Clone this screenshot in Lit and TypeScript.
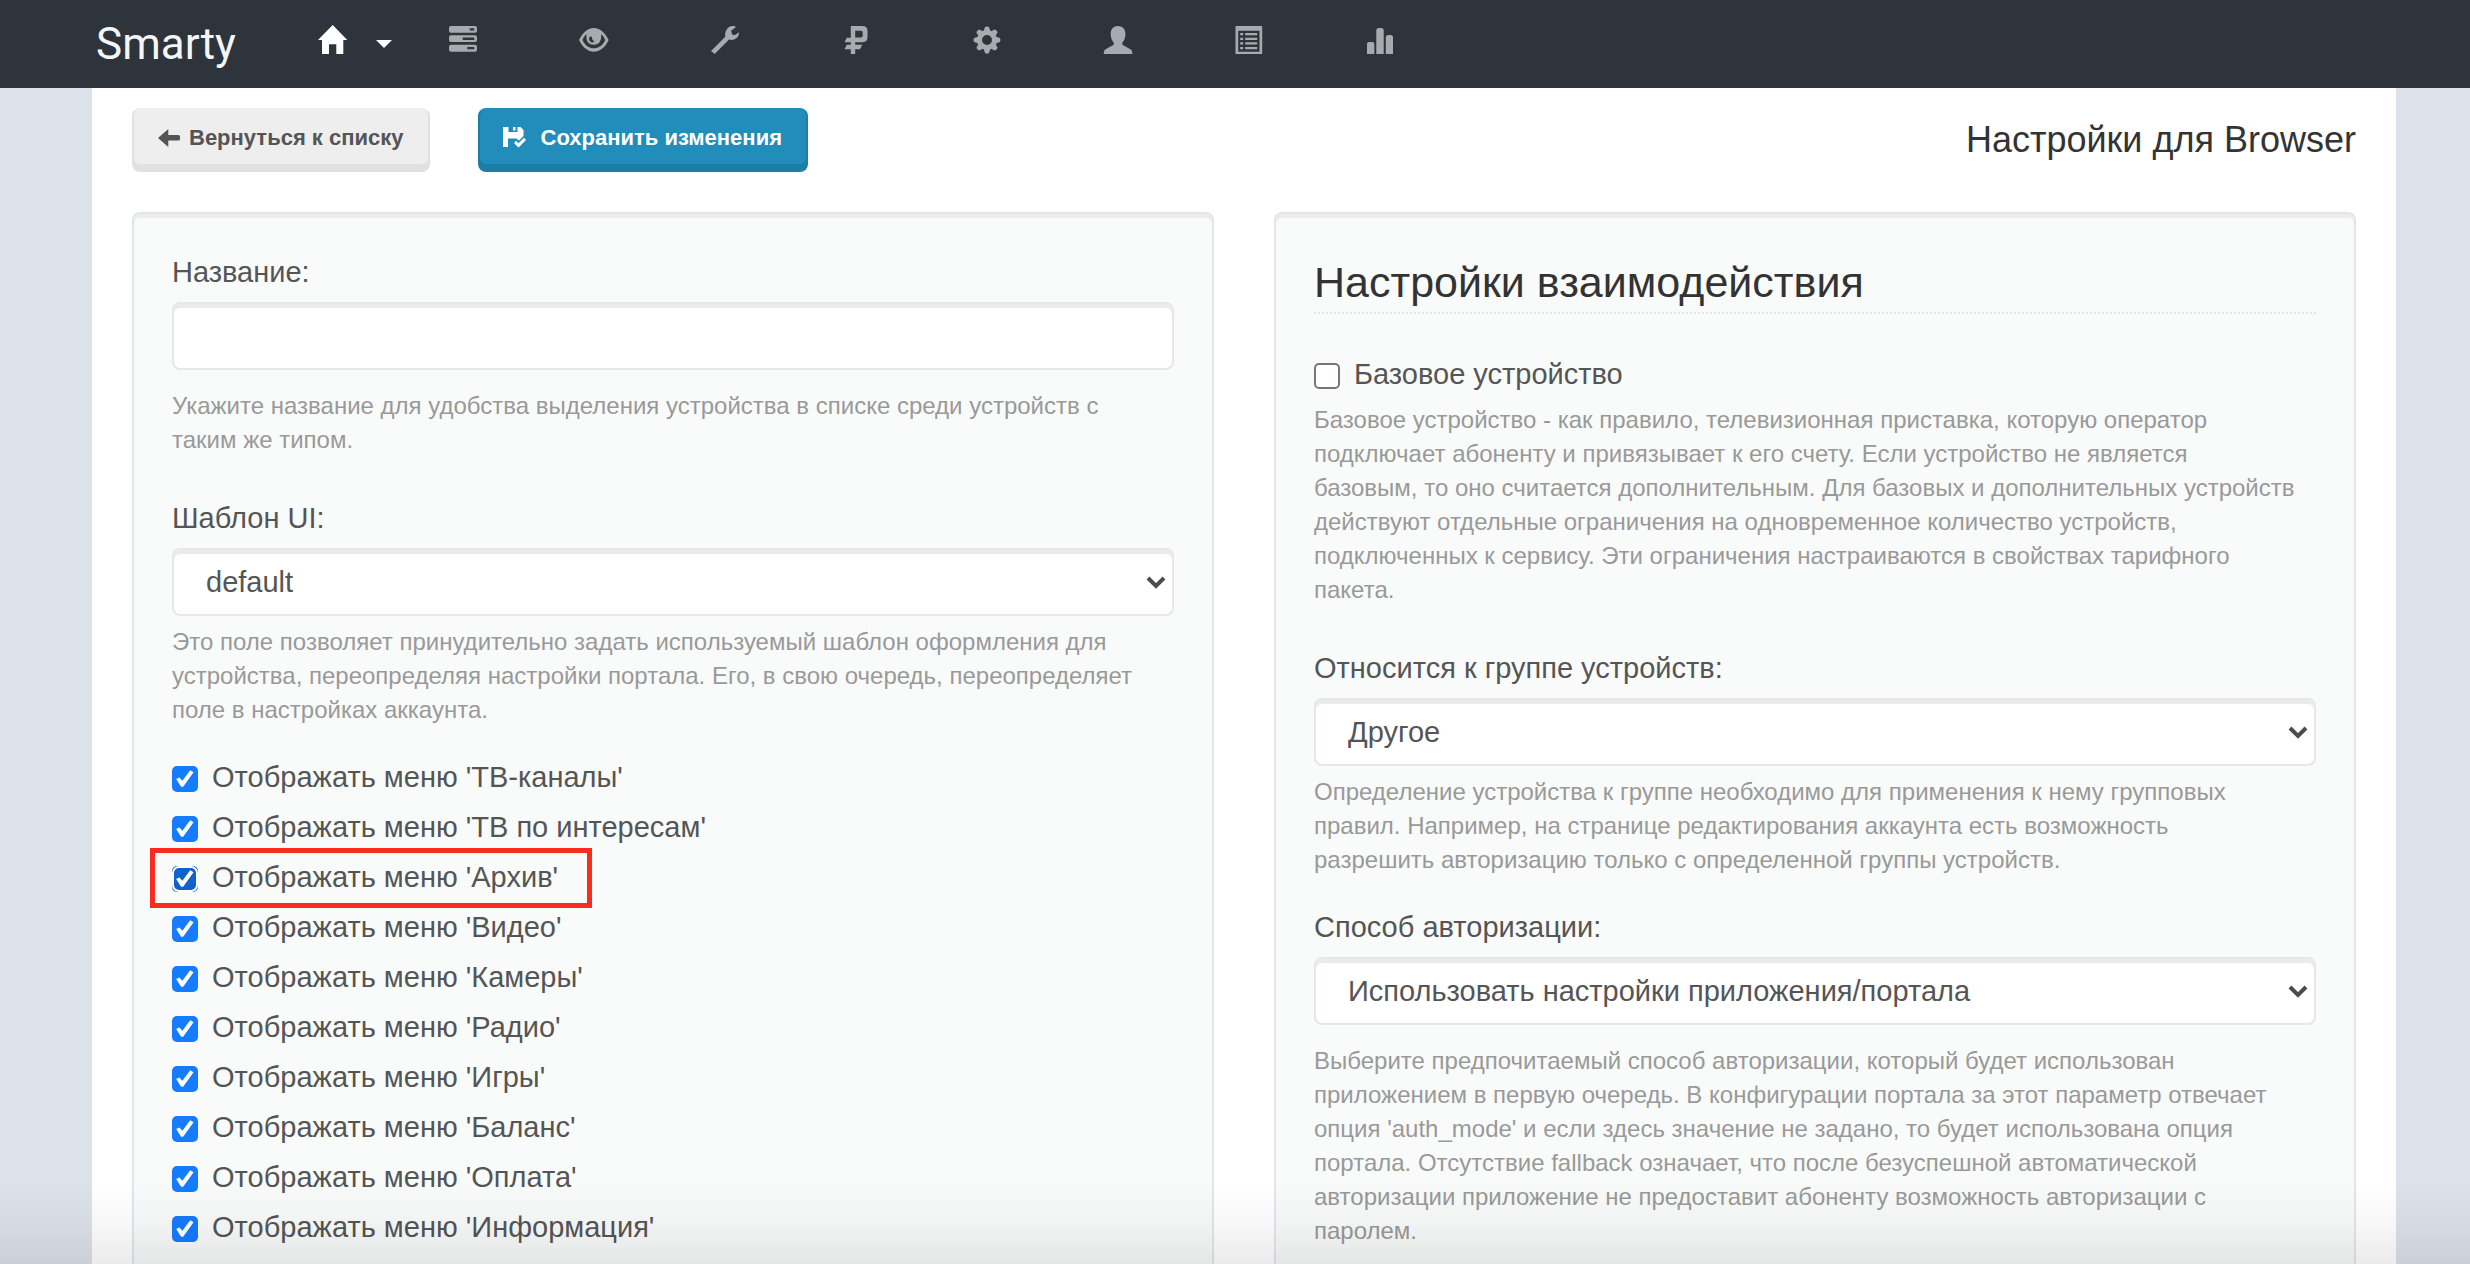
import { LitElement, html, css, svg } from "lit";
import { customElement, state } from "lit/decorators.js";
import { classMap } from "lit/directives/class-map.js";

const gearTeeth = [0, 45, 90, 135, 180, 225, 270, 315];

const icons = {
  home: svg`<path d="M14.7 0 29.3 15H25.3V29H18.300V19.300H11V29H4V15H0Z"/>`,
  servers: svg`<path fill-rule="evenodd" d="M3 1H27a2 2 0 0 1 2 2V5.700a2 2 0 0 1-2 2H3a2 2 0 0 1-2-2V3a2 2 0 0 1 2-2ZM21.700 3.300V5.600H26.300V3.300ZM3 10.300H27a2 2 0 0 1 2 2V15a2 2 0 0 1-2 2H3a2 2 0 0 1-2-2V12.300a2 2 0 0 1 2-2ZM14.700 12.600V15H26.300V12.600ZM3 19.700H27a2 2 0 0 1 2 2V24.700a2 2 0 0 1-2 2H3a2 2 0 0 1-2-2V21.700a2 2 0 0 1 2-2ZM19.300 22V24.300H26.300V22Z"/>`,
  eye: svg`<path transform="translate(0 3)" fill-rule="evenodd" d="M0 12C4 4 9 0 14.800 0S25.700 4 29.700 12C26 20 20.500 23.700 14.800 23.700S4 20 0 12ZM3.500 12C6 17.500 10 20.300 14.800 20.300S24 17.500 26.200 12C25.200 9.500 24 7.500 22 6.200C23 12 20.500 16.700 14.700 16.700S6.500 12 7.700 6.200C5.500 7.500 4.500 9.500 3.500 12ZM11 8.800C9.500 10 9.800 12.500 11.500 13.800C13 14.800 15 14.500 15.300 13C13.500 12.500 12.800 11 13 9.300C12.500 8.500 11.800 8.300 11 8.800Z"/>`,
  wrench: svg`<path transform="translate(1 1)" d="M0 25 14.300 10.700C13.500 5 16.500.5 21.500 0C23 0 24.200.4 25 1L20 4.700 21.300 8.700 24 9 28 6.300C28.200 10.500 25 14 20.500 14C19.500 14 18.700 13.800 18 13.500L3.700 28Z"/>`,
  ruble: svg`<path transform="translate(3.500 1)" fill-rule="evenodd" d="M6.300 0H18Q23 0 23 5V11Q23 16.200 18 16.200H10.700V18.700H17.700L15.500 23.300H10.700V28H6.300V23.300H0L2.300 18.700H6.300V16.200H0L2.300 11.700H6.300ZM10.700 4.700V11.500H16.500Q18.200 11.500 18.200 9.700V6.500Q18.200 4.700 16.500 4.700Z"/>`,
  gear: svg`<g transform="translate(15 15)"><circle r="7.500" fill="none" stroke="currentColor" stroke-width="5"/>${gearTeeth.map((a) => svg`<path transform="rotate(${a})" d="M-3.300-9 -2-13Q0-14 2-13L3.300-9Z"/>`)}</g>`,
  user: svg`<path transform="translate(.7 1)" d="M14.300 0C18.700 0 21.700 3 21.700 7.500C21.700 11 20.700 15 18.700 16.500V18.700C22 21 26.500 22.500 28 24.500Q28.700 25.500 28.700 28H0Q0 25.500.7 24.500C2.200 22.500 6.700 21 10 18.700V16.500C8 15 7 11 7 7.500C7 3 10 0 14.300 0Z"/>`,
  list: svg`<path transform="translate(1.500 1)" fill-rule="evenodd" d="M0 0H26.700V28H0ZM2.700 4.700V25.700H24V4.700ZM4.700 7h3v2.300h-3ZM9.700 7h12v2.300h-12ZM4.700 11.700h3V14h-3ZM9.700 11.700h12V14h-12ZM4.700 16.300h3v2.300h-3ZM9.700 16.300h12v2.300h-12ZM4.700 21h3v2.300h-3ZM9.700 21h12v2.300h-12Z"/>`,
  chart: svg`<path transform="translate(2 3)" d="M0 26V16Q0 14 2 14H5.300Q7.300 14 7.300 16V26ZM9.300 26V2.500Q9.300 0 11.800 0H14.200Q16.700 0 16.700 2.500V26ZM18.800 26V9.500Q18.800 7 21.300 7H23.500Q26 7 26 9.500V26Z"/>`,
};

const menuLinks: { label: string; icon: keyof typeof icons }[] = [
  { label: "Серверы", icon: "servers" },
  { label: "Просмотр", icon: "eye" },
  { label: "Инструменты", icon: "wrench" },
  { label: "Платежи", icon: "ruble" },
  { label: "Настройки", icon: "gear" },
  { label: "Пользователи", icon: "user" },
  { label: "Журнал", icon: "list" },
  { label: "Статистика", icon: "chart" },
];

const menuFlags = ["ТВ-каналы", "ТВ по интересам", "Архив", "Видео", "Камеры", "Радио", "Игры", "Баланс", "Оплата", "Информация"];

@customElement("app-root")
export class AppRoot extends LitElement {
  @state() private highlighted = "Архив";

  static styles = css`
    :host {
      display: block;
      font-family: "Liberation Sans", Arial, sans-serif;
      font-size: 29px;
      line-height: 40px;
      color: #555;
    }
    *, *::before, *::after { box-sizing: border-box; }
    .page {
      min-height: 100vh;
      display: flex;
      flex-direction: column;
      background: #dde1e9;
    }
    .bar {
      height: 88px;
      padding: 0 96px;
      display: flex;
      align-items: center;
      background: #2d343c;
    }
    .logo {
      width: 222px;
      font-family: Roboto, "Liberation Sans", sans-serif;
      font-size: 44px;
      line-height: 60px;
      color: #f4f5f6;
      text-decoration: none;
    }
    .menu { display: flex; align-items: center; padding-bottom: 8px; }
    .home { display: flex; align-items: center; gap: 28px; width: 79px; color: #fff; }
    .link { display: flex; justify-content: center; width: 131px; color: #a7abb1; }
    .icon { width: 30px; height: 30px; fill: currentColor; display: block; }
    .caret { width: 16px; height: 8px; fill: currentColor; display: block; margin-top: 8px; }
    .sheet {
      flex: 1;
      display: flex;
      flex-direction: column;
      gap: 40px;
      margin: 0 74px 0 92px;
      padding: 20px 40px 0;
      background: #fff;
    }
    .actions { display: flex; align-items: center; gap: 48px; }
    .button {
      height: 64px;
      display: flex;
      align-items: center;
      padding: 0 24px 4px;
      border: 2px solid #e1e1e1;
      border-top-color: #eee;
      border-radius: 8px;
      background: #eee;
      box-shadow: inset 0 -6px #e1e1e1;
      font: bold 22px/32px "Liberation Sans", Arial, sans-serif;
      color: #555;
    }
    .back { gap: 9px; }
    .save {
      gap: 15px;
      padding-left: 22px;
      color: #fff;
      background: #228dba;
      border-color: #1e7da5;
      border-top-color: #228dba;
      box-shadow: inset 0 -6px #1e7da5;
    }
    .glyph { width: 22px; height: 18px; fill: currentColor; display: block; }
    .disk { width: 24px; height: 24px; fill: currentColor; display: block; }
    .title {
      margin: 0 0 0 auto;
      font-size: 36px;
      line-height: 52px;
      font-weight: normal;
      color: #333;
    }
    .columns {
      flex: 1;
      display: grid;
      grid-template-columns: 1fr 1fr;
      gap: 60px;
    }
    .panel {
      padding: 38px 38px 0;
      border: 2px solid #e2e6ea;
      border-bottom: 0;
      border-radius: 8px 8px 0 0;
      background: #f9fbfa;
      box-shadow: inset 0 4px #ebeeed;
    }
    .group { margin-bottom: 30px; }
    .label { display: block; margin-bottom: 10px; }
    .field {
      display: block;
      width: 100%;
      height: 68px;
      padding: 0 32px;
      border: 2px solid #e6e7e7;
      border-radius: 8px;
      background: #fff;
      box-shadow: inset 0 4px #ebebeb;
      font: inherit;
      color: #555;
      appearance: none;
      outline: 0;
    }
    .picker { position: relative; }
    .chevron {
      position: absolute;
      right: 8px;
      top: 28px;
      width: 20px;
      height: 14px;
      fill: none;
      stroke: #4c4c4c;
      stroke-width: 4;
      pointer-events: none;
    }
    .help {
      margin: 9px 0 0;
      font-size: 24px;
      line-height: 34px;
      color: #999;
      white-space: nowrap;
    }
    .spaced { margin-top: 19px; }
    .roomy { margin-bottom: 41px; }
    .heading {
      margin: 0 0 40px;
      padding: 6px 0 6px;
      border-bottom: 2px dotted #e3e5e4;
      font-size: 43px;
      line-height: 48px;
      font-weight: normal;
      color: #333;
    }
    .flags { display: grid; gap: 10px; margin: 0; padding: 0; list-style: none; }
    .flag { position: relative; display: flex; align-items: flex-start; gap: 14px; }
    .tick {
      flex: none;
      appearance: none;
      position: relative;
      width: 26px;
      height: 26px;
      margin: 9px 0 0;
      border: 2px solid #767676;
      border-radius: 5px;
      background: #fff;
    }
    .tick:checked {
      border: 0;
      background: #157bff;
    }
    .tick:checked::before {
      content: "";
      position: absolute;
      inset: 0;
      background: #fff;
      clip-path: polygon(16% 50%, 28% 44%, 40% 57%, 70% 16%, 83% 24%, 43% 80%, 35% 80%);
    }
    .marked .tick { background: #0e62cb; }
    .marked .tick::after {
      content: "";
      position: absolute;
      inset: 0;
      border: 2px solid #fff;
      border-radius: 7px;
    }
    .marked::after {
      content: "";
      position: absolute;
      left: -22px;
      top: -9px;
      width: 442px;
      height: 60px;
      border: 5px solid #fb2c1e;
      pointer-events: none;
    }
    .shade {
      position: fixed;
      inset: auto 0 0;
      height: 84px;
      background: linear-gradient(rgba(0, 0, 0, 0), rgba(0, 0, 0, 0.03) 55%, rgba(0, 0, 0, 0.08));
      pointer-events: none;
    }
  `;

  private renderPicker(id: string, label: string, value: string) {
    return html`
      <label class="label" for=${id}>${label}</label>
      <div class="picker">
        <select class="field" id=${id}><option>${value}</option></select>
        <svg class="chevron" viewBox="0 0 20 14"><path d="M2 2 10 10 18 2" /></svg>
      </div>
    `;
  }

  render() {
    return html`
      <div class="page">
        <header class="bar">
          <a class="logo" href="#">Smarty</a>
          <nav class="menu">
            <a class="home" href="#" aria-label="Главная">
              <svg class="icon" viewBox="0 0 30 30">${icons.home}</svg>
              <svg class="caret" viewBox="0 0 16 8"><path d="M0 0H16L8 8Z" /></svg>
            </a>
            ${menuLinks.map((m) => html`<a class="link" href="#" aria-label=${m.label}><svg class="icon" viewBox="0 0 30 30">${icons[m.icon]}</svg></a>`)}
          </nav>
        </header>
        <main class="sheet">
          <div class="actions">
            <button class="button back" type="button">
              <svg class="glyph" viewBox="0 0 22 18"><path d="M0 9 10.300 0V6H20.500Q22 6 22 7.500V10Q22 11.500 20.500 11.500H10.300V18Z" /></svg>
              Вернуться к списку
            </button>
            <button class="button save" type="button">
              <svg class="disk" viewBox="0 0 24 24"><path d="M1 1H6.500V6H15.500V1H18.500L21.500 4V10L17 14.500 14.500 12.500H6V21H1ZM11 1H13.500V4.500H11ZM12 17 14 14.800 16.500 17.300 22 11.800 24 14 16.500 21.500Z" /></svg>
              Сохранить изменения
            </button>
            <h1 class="title">Настройки для Browser</h1>
          </div>
          <div class="columns">
            <section class="panel">
              <div class="group roomy">
                <label class="label" for="name">Название:</label>
                <input class="field" id="name" type="text" />
                <p class="help spaced">Укажите название для удобства выделения устройства в списке среди устройств с<br />таким же типом.</p>
              </div>
              <div class="group">
                ${this.renderPicker("template", "Шаблон UI:", "default")}
                <p class="help">Это поле позволяет принудительно задать используемый шаблон оформления для<br />устройства, переопределяя настройки портала. Его, в свою очередь, переопределяет<br />поле в настройках аккаунта.</p>
              </div>
              <ul class="flags">
                ${menuFlags.map((f) => html`<li><label class=${classMap({ flag: true, marked: f === this.highlighted })}><input class="tick" type="checkbox" checked />Отображать меню '${f}'</label></li>`)}
              </ul>
            </section>
            <section class="panel">
              <h2 class="heading">Настройки взаимодействия</h2>
              <div class="group roomy">
                <label class="flag"><input class="tick" type="checkbox" />Базовое устройство</label>
                <p class="help">Базовое устройство - как правило, телевизионная приставка, которую оператор<br />подключает абоненту и привязывает к его счету. Если устройство не является<br />базовым, то оно считается дополнительным. Для базовых и дополнительных устройств<br />действуют отдельные ограничения на одновременное количество устройств,<br />подключенных к сервису. Эти ограничения настраиваются в свойствах тарифного<br />пакета.</p>
              </div>
              <div class="group">
                ${this.renderPicker("device-group", "Относится к группе устройств:", "Другое")}
                <p class="help">Определение устройства к группе необходимо для применения к нему групповых<br />правил. Например, на странице редактирования аккаунта есть возможность<br />разрешить авторизацию только с определенной группы устройств.</p>
              </div>
              <div>
                ${this.renderPicker("auth", "Способ авторизации:", "Использовать настройки приложения/портала")}
                <p class="help spaced">Выберите предпочитаемый способ авторизации, который будет использован<br />приложением в первую очередь. В конфигурации портала за этот параметр отвечает<br />опция 'auth_mode' и если здесь значение не задано, то будет использована опция<br />портала. Отсутствие fallback означает, что после безуспешной автоматической<br />авторизации приложение не предоставит абоненту возможность авторизации с<br />паролем.</p>
              </div>
            </section>
          </div>
        </main>
        <div class="shade"></div>
      </div>
    `;
  }
}
